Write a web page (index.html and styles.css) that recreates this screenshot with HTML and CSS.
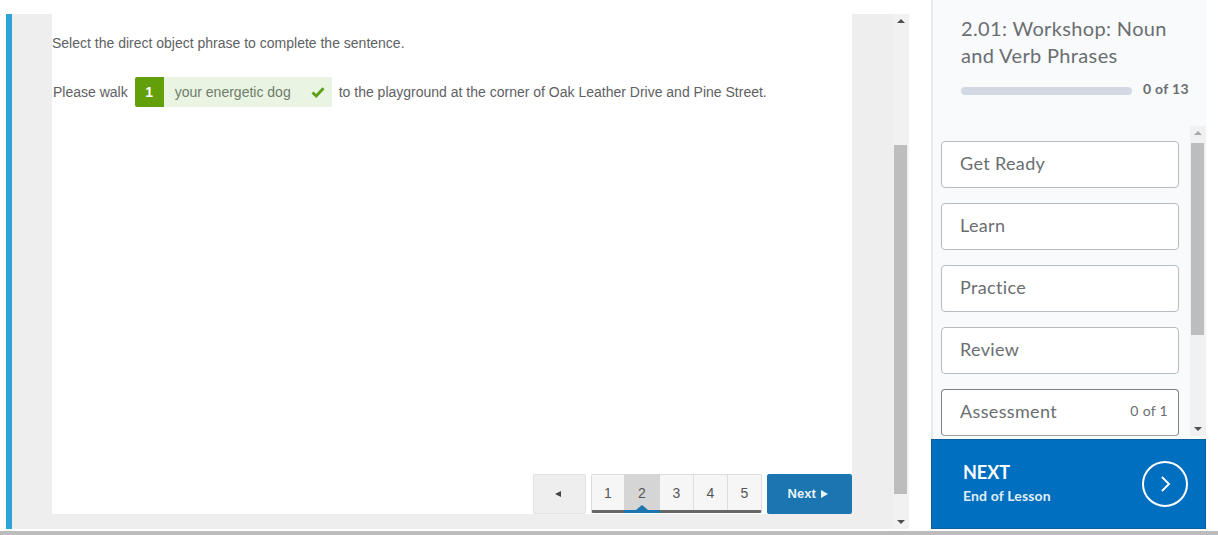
FILE: index.html
```html
<!DOCTYPE html>
<html lang="en">
<head>
    <meta charset="UTF-8">
    <title>2.01: Workshop: Noun and Verb Phrases</title>
    <link rel="stylesheet" href="styles.css">
</head>
<body>
<div class="page">
    <div class="main">
        <div class="lesson">
            <div class="card">
                <p class="prompt">Select the direct object phrase to complete the sentence.</p>
                <div class="sentence">
                    <span>Please walk</span>
                    <span class="answer">
                        <span class="answer-num">1</span>
                        <span class="answer-text">your energetic dog</span>
                        <svg class="answer-check" width="14" height="12" viewBox="0 0 14 12"><path d="M1.5 6.5 L5.2 10 L12.5 2.2" fill="none" stroke="#5b9f12" stroke-width="2.8"/></svg>
                    </span>
                    <span>to the playground at the corner of Oak Leather Drive and Pine Street.</span>
                </div>
                <div class="pager">
                    <div class="prev"><span class="tri-left"></span></div>
                    <ul class="pages">
                        <li>1</li>
                        <li class="active">2</li>
                        <li>3</li>
                        <li>4</li>
                        <li>5</li>
                    </ul>
                    <div class="next">Next <span class="tri-right"></span></div>
                </div>
            </div>
        </div>
        <div class="scrollbar main-scroll">
            <span class="arrow-up"></span>
            <div class="thumb main-thumb"></div>
            <span class="arrow-down"></span>
        </div>
    </div>

    <div class="side">
        <div class="side-head">
            <h1 class="side-title">2.01: Workshop: Noun and Verb Phrases</h1>
            <div class="progress">
                <div class="progress-bar"></div>
                <span class="progress-text">0 of 13</span>
            </div>
        </div>
        <div class="side-scroll">
            <ul class="units">
                <li>Get Ready</li>
                <li>Learn</li>
                <li>Practice</li>
                <li>Review</li>
                <li class="current">Assessment <span class="unit-count">0 of 1</span></li>
            </ul>
            <div class="scrollbar list-scroll">
                <span class="arrow-up light"></span>
                <div class="thumb list-thumb"></div>
                <span class="arrow-down"></span>
            </div>
        </div>
        <div class="cta">
            <div>
                <div class="cta-title">NEXT</div>
                <div class="cta-sub">End of Lesson</div>
            </div>
            <svg width="46" height="46" viewBox="0 0 46 46"><circle cx="23" cy="23" r="22" fill="none" stroke="#fff" stroke-width="2"/><path d="M20 16 L27 23 L20 30" fill="none" stroke="#fff" stroke-width="1.8"/></svg>
        </div>
    </div>
</div>
<div class="bottom-bar"></div>
</body>
</html>
```

FILE: styles.css
```css
* {
    margin: 0;
    padding: 0;
    list-style: none;
    box-sizing: border-box;
}

body {
    background-color: #fff;
    height: 535px;
    overflow: hidden;
    font-family: "Liberation Sans", Arial, sans-serif;
}

.page {
    display: flex;
    height: 531px;
    padding-bottom: 2px;
    padding-left: 6px;
}

/*---------------- left side ----------------*/
.main {
    display: flex;
    width: 903px;
    margin-top: 14px;
}

.lesson {
    width: 887px;
    background-color: #eee;
    border-left: 6px solid #2ea3d8;
    padding: 0 41px 15px 40px;
}

.card {
    width: 800px;
    height: 500px;
    background-color: #fff;
    display: flex;
    flex-direction: column;
    font-size: 14px;
    color: #5e6163;
}

.prompt {
    margin-top: 21px;
    line-height: 16px;
}

.sentence {
    display: flex;
    align-items: center;
    margin-top: 26px;
    padding-left: 1px;
    gap: 7px;
}

.answer {
    display: flex;
    align-items: center;
    width: 197px;
    height: 30px;
    background-color: #e9f4e3;
    border-radius: 2px;
    color: #6f7d6a;
}

.answer-num {
    width: 29px;
    height: 30px;
    line-height: 30px;
    text-align: center;
    background-color: #629f0b;
    color: #fff;
    font-weight: bold;
    border-radius: 2px 0 0 2px;
}

.answer-text {
    margin-left: 11px;
    width: 136px;
}

.pager {
    display: flex;
    justify-content: flex-end;
    margin-top: auto;
    gap: 5px;
    height: 40px;
    font-size: 14px;
}

.prev {
    width: 53px;
    height: 40px;
    padding-right: 4px;
    background-color: #eee;
    border: 1px solid #e2e2e2;
    border-radius: 2px;
    display: flex;
    align-items: center;
    justify-content: center;
}

.tri-left {
    border: 3.5px solid transparent;
    border-left: 0;
    border-right: 6px solid #444;
}

.pages {
    display: flex;
    width: 171px;
    height: 39px;
    background-color: #f6f6f6;
    border: 1px solid #ddd;
    border-bottom: 3px solid #666;
    border-radius: 2px;
}

.pages li {
    width: 34px;
    line-height: 36px;
    text-align: center;
    border-right: 1px solid #ddd;
    color: #555;
}

.pages li:first-child {
    width: 33px;
}

.pages li:last-child {
    width: 33px;
    border-right: 0;
}

.pages li.active {
    position: relative;
    width: 36px;
    height: 39px;
    margin: -1px 0 0 -1px;
    line-height: 38px;
    background-color: #d5d5d5;
    border-right: 0;
    border-bottom: 3px solid #1b75b0;
}

.pages li.active:after {
    content: "";
    position: absolute;
    left: 12px;
    bottom: 0;
    border: 6px solid transparent;
    border-top: 0;
    border-bottom: 5px solid #1b75b0;
}

.next {
    width: 85px;
    height: 40px;
    line-height: 40px;
    padding-right: 3px;
    text-align: center;
    background-color: #1b75b0;
    color: #e8f2f8;
    font-size: 13px;
    font-weight: bold;
    border-radius: 2px;
}

.tri-right {
    display: inline-block;
    margin-left: 2px;
    border: 4px solid transparent;
    border-right: 0;
    border-left: 7px solid #e8f2f8;
}

/*---------------- scrollbars ----------------*/
.scrollbar {
    position: relative;
    width: 16px;
    padding-left: 1px;
    background-color: #f1f1f1;
}

.thumb {
    background-color: #bdbdbd;
    width: 13px;
}

.arrow-up,
.arrow-down {
    position: absolute;
    left: 4px;
    border: 4px solid transparent;
}

.arrow-up {
    top: 5px;
    border-top: 0;
    border-bottom: 4px solid #505050;
}

.arrow-up.light {
    border-bottom-color: #a8a8a8;
}

.arrow-down {
    bottom: 5px;
    border-bottom: 0;
    border-top: 4px solid #505050;
}

.main-scroll {
    height: 515px;
}

.main-thumb {
    margin-top: 131px;
    height: 349px;
}

.list-thumb {
    margin-top: 17px;
    height: 192px;
}

/*---------------- right side ----------------*/
.side {
    display: flex;
    flex-direction: column;
    width: 275px;
    height: 529px;
    margin-left: 22px;
    background-color: #f9fafb;
    border-left: 2px solid #e6eaf0;
    font-family: Lato, "Open Sans", sans-serif;
    color: #6a6e71;
}

.side-head {
    height: 126px;
    padding: 15px 16px 0 28px;
}

.side-title {
    font-size: 20px;
    font-weight: normal;
    line-height: 27px;
    width: 225px;
    letter-spacing: 0.35px;
}

.progress {
    display: flex;
    align-items: flex-start;
    gap: 11px;
    margin-top: 16px;
}

.progress-bar {
    width: 171px;
    height: 8px;
    margin-top: 2px;
    border-radius: 4px;
    background-color: #d3d9e3;
}

.progress-text {
    font-size: 14px;
    font-weight: bold;
    line-height: 8px;
    letter-spacing: 0.3px;
}

.side-scroll {
    display: flex;
    justify-content: space-between;
    height: 310px;
    overflow: hidden;
    padding-left: 8px;
}

.units {
    width: 238px;
    padding-top: 15px;
}

.units li {
    display: flex;
    align-items: center;
    justify-content: space-between;
    height: 47px;
    margin-bottom: 15px;
    padding: 0 10px 4px 18px;
    background-color: #fff;
    border: 1px solid #b5bdc2;
    border-radius: 4px;
    font-size: 18px;
    letter-spacing: 0.35px;
}

.units li.current {
    border-color: #7c8286;
    border-bottom-color: #9aa0a4;
}

.unit-count {
    font-size: 14px;
    letter-spacing: 0.3px;
}

.cta {
    display: flex;
    align-items: center;
    justify-content: space-between;
    height: 90px;
    margin: 3px 0 0 -2px;
    padding: 0 17px 0 31px;
    background-color: #006fbf;
    border: 1px solid #0a5f9e;
    color: #fff;
}

.cta-title {
    font-size: 18px;
    font-weight: bold;
    line-height: 24px;
}

.cta-sub {
    font-size: 14px;
    font-weight: bold;
    line-height: 24px;
    letter-spacing: 0.15px;
    color: #e0eef8;
}

.bottom-bar {
    height: 4px;
    background-color: #bcbcbc;
}
```
